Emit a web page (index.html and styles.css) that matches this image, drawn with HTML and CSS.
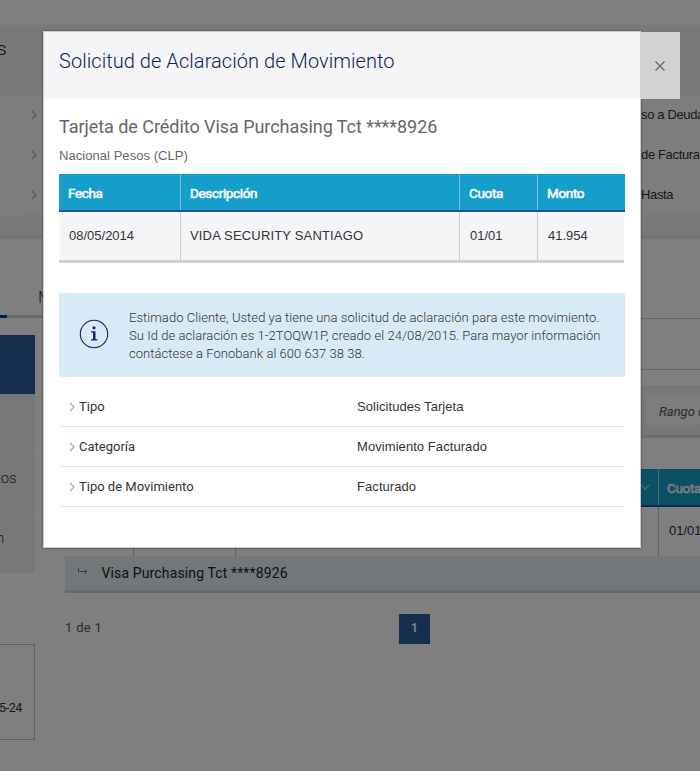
FILE: index.html
```html
<!DOCTYPE html>
<html lang="es">
<head>
<meta charset="utf-8">
<title>Solicitud de Aclaración de Movimiento</title>
<link rel="stylesheet" href="styles.css">
</head>
<body>
<div class="page">
  <section class="summary">
    <header class="summary-head"><span class="summary-title">s</span></header>
    <div class="summary-body">
      <div class="summary-left"></div>
      <div class="summary-list">
        <div class="summary-row"><svg class="chev" viewBox="0 0 6 10"><path d="M1 1l4 4-4 4"/></svg><span>so a Deuda</span></div>
        <div class="summary-row"><svg class="chev" viewBox="0 0 6 10"><path d="M1 1l4 4-4 4"/></svg><span>de Facturac</span></div>
        <div class="summary-row"><svg class="chev" viewBox="0 0 6 10"><path d="M1 1l4 4-4 4"/></svg><span>Hasta</span></div>
      </div>
    </div>
    <div class="summary-foot"></div>
  </section>
  <div class="tabs"><span class="tab-active"></span><span class="tab">M</span></div>
  <div class="content">
    <aside class="sidebar">
      <div class="side-item side-active"></div>
      <div class="side-item"></div>
      <div class="side-item"><span>tos</span></div>
      <div class="side-item"><span>n</span></div>
      <div class="side-box">5-24</div>
    </aside>
    <main class="main">
      <div class="line-row"></div>
      <div class="filter"><div class="filter-input">Rango de</div></div>
      <div class="grid-head"><div class="gh-first"><svg class="down" viewBox="0 0 10 6"><path d="M1 1l4 4 4-4"/></svg></div><div class="gh-cuota">Cuota</div></div>
      <div class="grid-row"><div class="c1"></div><div class="c2"></div><div class="c3"></div><div class="c4">01/01</div></div>
      <div class="grid-sub"><svg class="sub-arrow" viewBox="0 0 10 7"><path d="M.5 0v3.500h8.500M6.500 1.500l2.500 2-2.500 2"/></svg><span>Visa Purchasing Tct ****8926</span></div>
      <div class="pager"><span class="pager-info">1 de 1</span><span class="pager-btn">1</span></div>
    </main>
  </div>
</div>
<div class="overlay">
  <div class="modal" role="dialog">
    <header class="modal-head"><h1>Solicitud de Aclaración de Movimiento</h1></header>
    <button class="close" aria-label="Cerrar"><svg viewBox="0 0 10 10"><path d="M.5.5l9 9M9.500.5l-9 9"/></svg></button>
    <div class="modal-body">
      <h2>Tarjeta de Crédito Visa Purchasing Tct ****8926</h2>
      <p class="currency">Nacional Pesos (CLP)</p>
      <div class="table">
        <div class="tr th"><div>Fecha</div><div>Descripción</div><div>Cuota</div><div>Monto</div></div>
        <div class="tr td"><div>08/05/2014</div><div class="desc">VIDA SECURITY SANTIAGO</div><div>01/01</div><div>41.954</div></div>
      </div>
      <div class="notice">
        <svg class="info" viewBox="0 0 30 30"><circle cx="15" cy="15" r="13.700"/><path d="M12 12.200h4.500v8h2v1.300H12v-1.300h2v-6.700h-2z"/><circle class="dot" cx="15" cy="8.800" r="1.600"/></svg>
        <p>Estimado Cliente, Usted ya tiene una solicitud de aclaración para este movimiento.<br>Su Id de aclaración es 1-2TOQW1P, creado el 24/08/2015. Para mayor información<br>contáctese a Fonobank al 600 637 38 38.</p>
      </div>
      <dl class="details">
        <div><dt><svg class="chev" viewBox="0 0 6 10"><path d="M1 1l4 4-4 4"/></svg>Tipo</dt><dd>Solicitudes Tarjeta</dd></div>
        <div><dt><svg class="chev" viewBox="0 0 6 10"><path d="M1 1l4 4-4 4"/></svg>Categoría</dt><dd>Movimiento Facturado</dd></div>
        <div><dt><svg class="chev" viewBox="0 0 6 10"><path d="M1 1l4 4-4 4"/></svg>Tipo de Movimiento</dt><dd>Facturado</dd></div>
      </dl>
    </div>
  </div>
</div>
</body>
</html>
```
FILE: styles.css
```css
* { box-sizing: border-box; }
html, body { margin: 0; height: 771px; overflow: hidden; }
body { font-family: Roboto, "Liberation Sans", sans-serif; font-size: 13px; color: #333; background: #fff; }
h1, h2, p, dl, dd { margin: 0; }
svg { fill: none; flex: none; }

/* page behind the dialog */
.page { width: 700px; height: 771px; padding-top: 25px; overflow: hidden; white-space: nowrap; }
.summary { background: #f3f3f3; }
.summary-head { height: 70px; display: flex; padding-top: 12px; }
.summary-title { font-size: 19px; font-weight: 300; color: #001450; margin-left: -3px; }
.summary-body { display: flex; height: 120px; background: #fdfdfd; }
.summary-left { flex: none; width: 22px; border-right: 2px solid #f8f8f8; }
.summary-list { flex: 1; min-width: 0; background: #fbfbfb; }
.summary-row { height: 40px; display: flex; align-items: center; padding-left: 9px; border-bottom: 1px solid #f6f6f6; font-family: "Liberation Sans", sans-serif; letter-spacing: -.35px; }
.summary-row span { margin-left: 604px; }
.chev { width: 6px; height: 10px; stroke: #84b2cf; stroke-width: 1.2; }
.summary-row .chev { stroke: #a4bcc8; stroke-width: 1.5; }
.summary-foot { height: 24px; border-bottom: 4px solid #dfeaec; }
.tabs { width: 620px; height: 79px; display: flex; align-items: flex-end; border-bottom: 3px solid #d4d4d4; }
.tab-active { width: 7px; height: 3px; background: #003c8c; margin-bottom: -3px; }
.tab { margin: 0 0 8px 31px; font-size: 17px; font-weight: 300; line-height: 20px; }
.content { display: flex; }
.sidebar { flex: none; width: 35px; padding-top: 17px; }
.side-item { height: 60px; background: #f0f0f0; border-bottom: 1px solid #fafafa; font-size: 15px; font-weight: 300; line-height: 49px; }
.side-item span { margin-left: -4px; }
.side-active { height: 59px; background: #2c5c9c; border: 0; }
.side-box { height: 96px; margin-top: 70px; border: 1px solid #c0c0c0; border-left: 0; padding: 55px 0 0; font-size: 12.500px; letter-spacing: -.4px; text-indent: -1px; }
.main { flex: 1; padding-left: 30px; min-width: 0; }
.line-row { height: 52px; border-top: 1px solid #d2d2d2; border-bottom: 1px solid #d2d2d2; }
.filter { height: 53px; margin-top: 15px; padding: 10px 0 0 581px; background: #efefef; border-bottom: 3px solid #d8d8d8; }
.filter-input { height: 30px; background: #fbfbfb; border-radius: 3px; padding-left: 13px; line-height: 33px; font-style: italic; font-size: 13px; color: #555; }
.grid-head { display: flex; height: 38px; margin-top: 31px; background: #16a0cb; border-bottom: 2px solid #1e5799; color: #fff; }
.gh-first { flex: none; width: 593px; padding: 15px 8px 0 0; display: flex; justify-content: flex-end; }
.down { width: 10px; height: 6px; stroke: #b5d5e0; stroke-width: 1.2; }
.gh-cuota { border-left: 1px solid #a0d2e2; padding-left: 8px; font-size: 13.500px; -webkit-text-stroke: .5px #fff; line-height: 38px; letter-spacing: -.35px; }
.grid-row { display: flex; height: 49px; }
.grid-row div { flex: none; border-right: 1px solid #c0c0c0; }
.grid-row .c1 { width: 69px; }
.grid-row .c2 { width: 102px; }
.grid-row .c3 { width: 423px; }
.grid-row .c4 { border: 0; padding-left: 10px; line-height: 47px; font-family: "Liberation Sans", sans-serif; }
.grid-sub { display: flex; height: 37px; padding-left: 13px; background: #e2f0f4; border-bottom: 3px solid #d2d2d2; font-size: 14px; line-height: 34px; color: #222; letter-spacing: .13px; }
.sub-arrow { width: 10px; height: 7px; margin: 12px 13.500px 0 0; stroke: #777; stroke-width: 1; }
.pager { display: flex; height: 51px; padding-top: 21px; }
.pager-info { width: 334px; line-height: 27px; color: #555; letter-spacing: .3px; }
.pager-btn { width: 31px; height: 30px; background: #2c5c9c; color: #fff; font-weight: 700; text-align: center; line-height: 29px; font-size: 12px; }

/* dialog */
.overlay { position: absolute; inset: 0; background: rgba(0, 0, 0, .5); padding: 31px 0 0 43px; }
.modal { position: relative; width: 598px; height: 517px; background: #fff; border: 1px solid #ccc; box-shadow: 0 0 2px rgba(0, 0, 0, .5); white-space: nowrap; }
.modal-head { height: 67px; background: #f5f5f8; padding: 14px 0 0 15px; }
h1 { font-size: 20px; line-height: 30px; font-weight: 300; letter-spacing: .06px; color: #0b1f5c; }
.close { position: absolute; left: 596px; top: 0; width: 40px; height: 67px; padding: 0; border: 0; background: #d2d2d3; display: grid; place-items: center; }
.close svg { width: 10px; height: 10px; stroke: #735b52; stroke-width: 1.1; }
.modal-body { padding: 16px 15px 0; }
h2 { font-size: 18px; font-weight: 400; line-height: 24px; letter-spacing: -.05px; color: #666; }
.currency { font-family: "Liberation Sans", sans-serif; line-height: 18px; margin-top: 8px; color: #666; letter-spacing: .05px; }
.table { width: 566px; margin-top: 9px; }
.tr { display: grid; grid-template-columns: 121px 279px 78px 1fr; }
.tr div + div { border-left: 1px solid #ccc; }
.th { height: 38px; background: #169ecb; border-bottom: 2px solid #27539b; color: #fff; font-size: 13.500px; -webkit-text-stroke: .5px #fff; line-height: 38px; letter-spacing: -.35px; }
.th div { padding-left: 9px; }
.th div + div { border-color: #7cc6df; height: 36px; }
.td { width: 565px; height: 51px; background: #f5f5f8; border-bottom: 3px solid #d1d1d3; line-height: 47px; font-family: "Liberation Sans", sans-serif; }
.td div { padding-left: 10px; height: 48px; }
.td .desc { letter-spacing: .17px; padding-left: 9px; }
.notice { display: flex; width: 566px; height: 84px; margin-top: 30px; padding: 16px 0 0 20px; background: #d8eaf5; border-radius: 2px; font-weight: 300; line-height: 18px; letter-spacing: .05px; color: #333; }
.info { width: 30px; height: 30px; margin: 10px 20px 0 0; }
.info circle { stroke: #14236b; stroke-width: 1.1; }
.info path, .info .dot { fill: #14236b; stroke: none; }
.details { width: 565px; padding-top: 10px; }
.details > div { display: flex; height: 40px; border-bottom: 1px solid #e3e3e5; line-height: 39px; }
dt { width: 298px; padding-left: 10px; display: flex; align-items: center; }
dt .chev { margin-right: 4px; }
dd { font-family: "Liberation Sans", sans-serif; letter-spacing: .07px; }
```
